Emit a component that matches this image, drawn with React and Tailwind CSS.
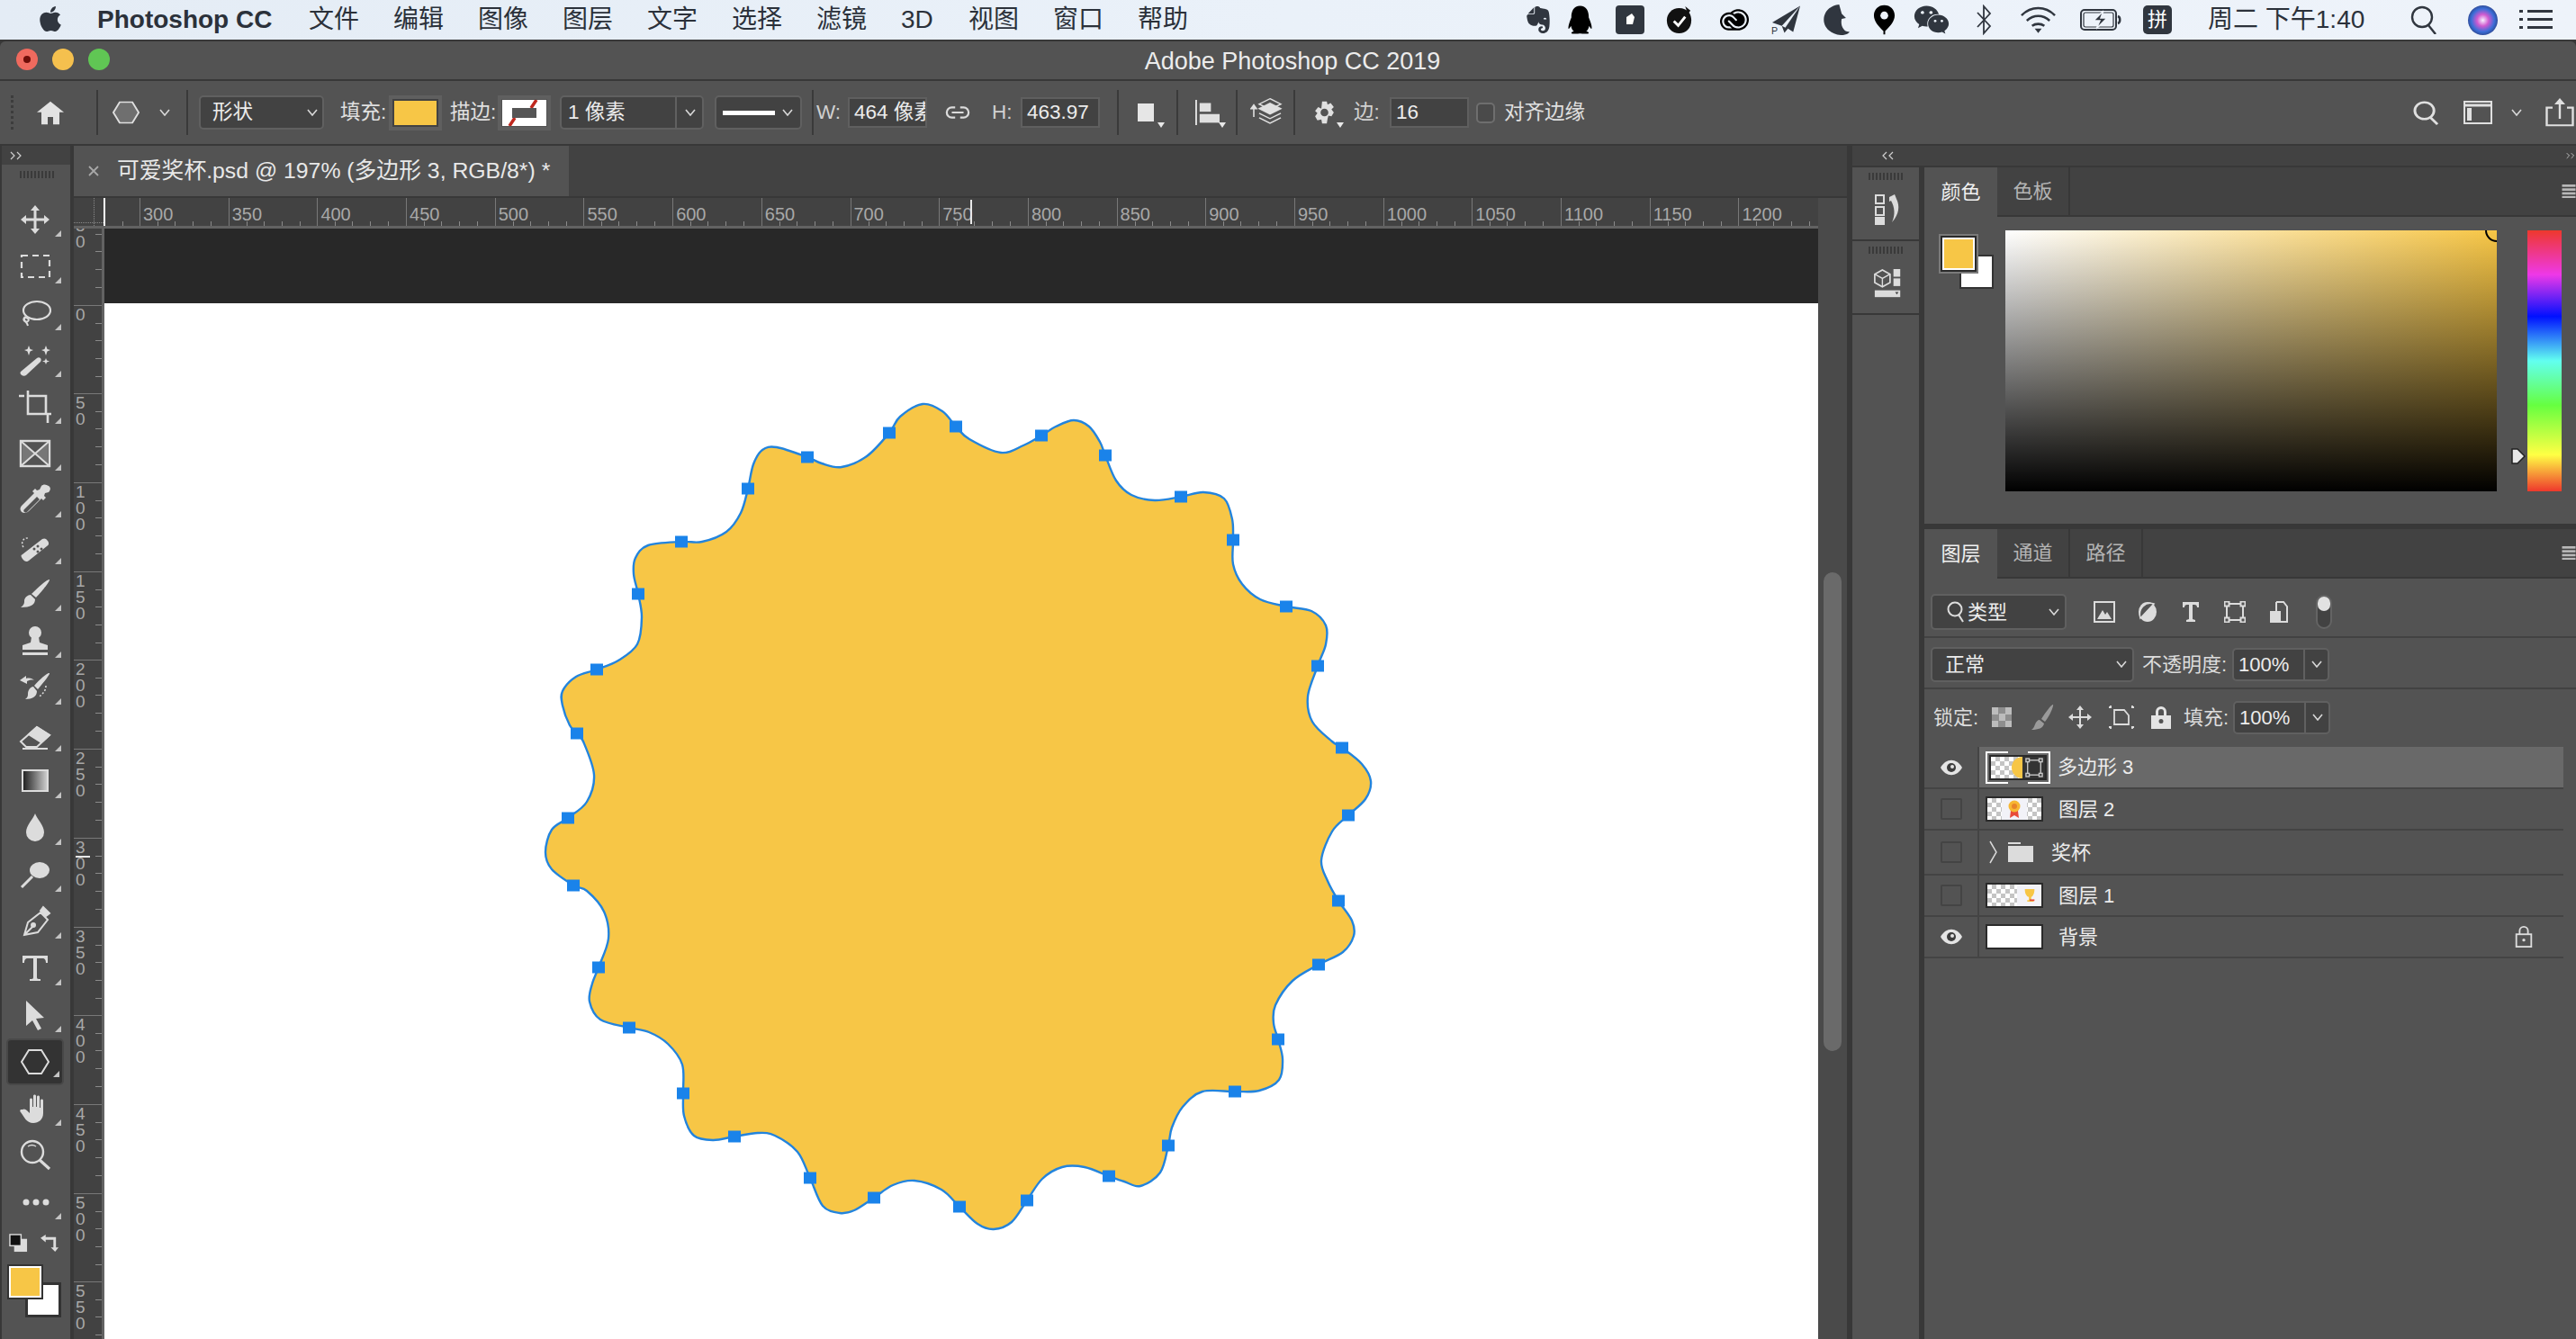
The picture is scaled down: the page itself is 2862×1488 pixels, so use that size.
import React from 'react';
import { FaApple, FaQq, FaWeixin } from 'react-icons/fa';
import { SiEvernote, SiAdobecreativecloud } from 'react-icons/si';

const pts = [
[988,481],[1000,463],[1025,449],[1047,457],[1062,474],[1077,488],[1112,503],[1137,495],[1157,484],[1173,474],[1193,467],[1210,474],[1222,491],[1228,506],[1240,534],[1257,550],[1283,556],[1312,552],[1337,547],[1360,554],[1369,577],[1370,600],[1370,627],[1380,649],[1400,666],[1429,674],[1457,679],[1473,695],[1473,716],[1464,740],[1453,774],[1458,802],[1480,824],[1491,831],[1513,849],[1523,868],[1517,888],[1498,906],[1480,924],[1468,956],[1475,979],[1487,1001],[1502,1023],[1504,1040],[1492,1058],[1465,1072],[1436,1090],[1417,1117],[1415,1137],[1420,1155],[1425,1177],[1421,1200],[1399,1212],[1372,1213],[1336,1213],[1314,1230],[1302,1253],[1298,1273],[1289,1303],[1267,1318],[1249,1313],[1232,1307],[1205,1297],[1180,1297],[1158,1310],[1141,1334],[1124,1358],[1104,1366],[1086,1360],[1066,1341],[1046,1322],[1016,1312],[992,1317],[971,1331],[949,1345],[933,1348],[914,1340],[900,1309],[886,1280],[861,1262],[842,1259],[816,1263],[792,1267],[771,1262],[760,1240],[759,1215],[758,1183],[742,1160],[721,1147],[699,1142],[667,1133],[655,1113],[658,1093],[665,1075],[676,1043],[671,1013],[652,990],[637.5,984],[613,966],[606,947],[613,922],[631,909],[652,891],[660,861],[648,824],[641,815],[633,806],[625,784],[625,768],[640,752],[663,744],[687,734],[708,716],[713,686],[709,660],[704,638],[706,620],[720,606],[757,602],[780,602],[807,591],[823,570],[831,543],[837,516],[847,500],[863,497],[897,508],[913,515],[935,519],[963,507]
];
const handles = [[988,481],[1062,474],[1157,484],[1228,506],[1312,552],[1370,600],[1429,674],[1464,740],[1491,831],[1498,906],[1487,1001],[1465,1072],[1420,1155],[1372,1213],[1298,1273],[1232,1307],[1141,1334],[1066,1341],[971,1331],[900,1309],[816,1263],[759,1215],[699,1142],[665,1075],[637,984],[631,909],[641,815],[663,744],[709,660],[757,602],[831,543],[897,508]];

function smooth(p) {
  const n = p.length;
  let d = `M${p[0][0]} ${p[0][1]}`;
  for (let i = 0; i < n; i++) {
    const a = p[(i - 1 + n) % n], b = p[i], c = p[(i + 1) % n], e = p[(i + 2) % n];
    const c1 = [b[0] + (c[0] - a[0]) / 6, b[1] + (c[1] - a[1]) / 6];
    const c2 = [c[0] - (e[0] - b[0]) / 6, c[1] - (e[1] - b[1]) / 6];
    d += `C${c1[0].toFixed(1)} ${c1[1].toFixed(1)} ${c2[0].toFixed(1)} ${c2[1].toFixed(1)} ${c[0]} ${c[1]}`;
  }
  return d + 'Z';
}

const Chev = ({ className = 'w-[12px] h-[8px]', color = '#d8d8d8' }) => (
  <svg viewBox="0 0 12 8" className={className} fill="none" stroke={color} strokeWidth="1.6"><path d="M1 1l5 6 5-6" /></svg>
);

const Sep = () => <div className="w-[2px] h-[50px] bg-[#3a3a3a]" />;

const Select = ({ w, children }) => (
  <div className={`${w} h-[38px] flex items-center justify-between rounded-[5px] border-2 border-[#606060] bg-[#424242] text-[#ececec]`}>
    {children}
  </div>
);

const Input = ({ w, children }) => (
  <div className={`${w} h-[34px] flex items-center pl-[5px] border-2 border-[#5f5f5f] bg-[#424242] text-[#ececec] overflow-hidden whitespace-nowrap`}>{children}</div>
);

const Tri = () => <svg viewBox="0 0 8 6" className="w-[8px] h-[6px] self-end" fill="#e8e8e8"><path d="M0 0h8L4 6z" /></svg>;

function MenuBar() {
  const items = ['文件', '编辑', '图像', '图层', '文字', '选择', '滤镜', '3D', '视图', '窗口', '帮助'];
  const ic = '#30363f';
  return (
    <div className="h-[44px] shrink-0 flex items-center bg-[linear-gradient(to_right,#e4ecf5,#eaf1f9_50%,#eef3fa)] text-[#2b313a] text-[28px] leading-[46px]">
      <FaApple className="ml-[40px] w-[32px] h-[32px] text-[#30363f] -mt-[3px]" />
      <div className="ml-[36px] font-bold w-[199px] whitespace-nowrap text-[28px]">Photoshop CC</div>
      <div className="ml-[36px] flex gap-[38px] whitespace-nowrap">
        {items.map((t) => <span key={t} className={t === '3D' ? 'w-[37px]' : 'w-[56px]'}>{t}</span>)}
      </div>
      <div className="ml-[374px] flex items-center h-full">
        <SiEvernote className="w-[30px] h-[34px]" style={{ color: ic }} />
        <FaQq className="ml-[18px] w-[27px] h-[32px] text-black" />
        <svg viewBox="0 0 32 32" className="ml-[26px] w-[32px] h-[32px]"><rect width="32" height="32" rx="4" fill={ic} /><path d="M12 13l6-4 3 4-2 8-7 0z" fill="#fff" /></svg>
        <svg viewBox="0 0 34 34" className="ml-[22px] w-[33px] h-[33px]"><path d="M17 3c10 0 14 7 14 14 0 9-6 15-14 15S3 26 3 17C3 9 9 3 17 3z" fill="#111" /><path d="M24 1l6 5-3 4z" fill="#111" /><path d="M11 18l5 5 8-10" fill="none" stroke="#fff" strokeWidth="3" /></svg>
        <SiAdobecreativecloud className="ml-[26px] w-[38px] h-[32px] text-black" />
        <svg viewBox="0 0 34 34" className="ml-[22px] w-[33px] h-[34px]"><path d="M33 1L1 20l11 4 3 8 4-5 6 4z" fill={ic} /><path d="M33 1L12 24l4 2z" fill="#eaf1f9" /><text x="0" y="33" fontSize="11" fill={ic} fontFamily="Liberation Sans">P</text></svg>
        <svg viewBox="0 0 32 38" className="ml-[24px] w-[31px] h-[36px]"><path d="M19 1C8 2 1 10 1 19s8 17 20 18c8 0 10-3 10-4-6 1-11-7-9-15l5-1-5-5z" fill={ic} /></svg>
        <svg viewBox="0 0 26 36" className="ml-[25px] w-[25px] h-[36px]"><path d="M13 1c7 0 12 5 12 12 0 7-6 13-11 18v4h-2v-4C7 26 1 20 1 13 1 6 6 1 13 1z" fill="#000" /><circle cx="13" cy="13" r="4.5" fill="#eef3fa" /></svg>
        <FaWeixin className="ml-[20px] w-[40px] h-[36px]" style={{ color: ic }} />
        <svg viewBox="0 0 20 34" className="ml-[28px] w-[20px] h-[34px]" fill="none" stroke={ic} strokeWidth="1.8"><path d="M3 9l14 15-7 8V2l7 8L3 25" /></svg>
        <svg viewBox="0 0 42 32" className="ml-[30px] w-[41px] h-[32px]" fill="none" stroke={ic} strokeWidth="2.6"><path d="M2 11c11-11 27-11 38 0M8 17c8-7 18-7 26 0M14 23c4-3 10-3 14 0" /><path d="M21 31l-4-5h8z" fill={ic} stroke="none" /></svg>
        <svg viewBox="0 0 46 26" className="ml-[26px] w-[46px] h-[26px]" fill="none" stroke={ic} strokeWidth="2"><rect x="1" y="2" width="39" height="22" rx="4" /><rect x="4" y="5" width="33" height="16" rx="2" strokeWidth="1.2" /><path d="M42 9c3 1 3 7 0 8" strokeWidth="2.5" /><path d="M26 3L15 14h7l-4 9 12-12h-7z" fill={ic} stroke="#eef3fa" strokeWidth="1.5" /></svg>
        <div className="ml-[24px] w-[32px] h-[32px] rounded-[5px] bg-[#30363f] flex items-center justify-center text-white text-[22px] leading-none">拼</div>
        <div className="ml-[40px] w-[177px] whitespace-nowrap text-[28px]">周二 下午1:40</div>
        <svg viewBox="0 0 30 32" className="ml-[48px] w-[30px] h-[32px]" fill="none" stroke={ic} strokeWidth="2.4"><circle cx="13" cy="13" r="11" /><path d="M20 22l8 10" /></svg>
        <div className="ml-[34px] w-[33px] h-[33px] rounded-full bg-[radial-gradient(circle_at_50%_50%,#f8f0ff_0%,#d05ad0_28%,#3a6ed8_55%,#2b3a78_80%,#101830_100%)]" />
        <svg viewBox="0 0 37 22" className="ml-[24px] w-[37px] h-[22px]" fill={ic}><rect x="0" y="0" width="4" height="3" /><rect x="9" y="0" width="28" height="3" /><rect x="0" y="9" width="4" height="3" /><rect x="9" y="9" width="28" height="3" /><rect x="0" y="18" width="4" height="3" /><rect x="9" y="18" width="28" height="3" /></svg>
      </div>
    </div>
  );
}

function TitleBar() {
  return (
    <div className="h-[42px] mt-[2px] pt-[2px] shrink-0 relative flex items-center justify-center bg-[#535353] text-[#ececec] text-[27px] rounded-t-[6px]">
      <div className="absolute left-[18px] top-[8px] flex gap-[16px]">
        <span className="w-[24px] h-[24px] rounded-full bg-[#ef6a5e] flex items-center justify-center"><span className="w-[8px] h-[8px] rounded-full bg-[#6e0e08]" /></span>
        <span className="w-[24px] h-[24px] rounded-full bg-[#f5c04e]" />
        <span className="w-[24px] h-[24px] rounded-full bg-[#60c654]" />
      </div>
      <span className="ml-[10px]">Adobe Photoshop CC 2019</span>
    </div>
  );
}

function OptionsBar() {
  return (
    <div className="h-[70px] mt-[2px] shrink-0 flex items-center bg-[#535353] text-[#e0e0e0] text-[22.5px] whitespace-nowrap">
      <div className="ml-[12px] w-[4px] h-[38px] border-l-[3px] border-dotted border-[#3c3c3c]" />
      <svg viewBox="0 0 32 36" preserveAspectRatio="none" className="ml-[24px] w-[32px] h-[27px]" fill="#e2e2e2"><path d="M16 1L1 17h5v18h7V24h6v11h7V17h5z" /></svg>
      <div className="ml-[35px]"><Sep /></div>
      <svg viewBox="0 0 30 36" preserveAspectRatio="none" className="ml-[16px] w-[30px] h-[26px]" fill="#6f6f6f" stroke="#e0e0e0" strokeWidth="2"><path d="M8 2h14l7 16-7 16H8L1 18z" /></svg>
      <div className="ml-[22px]"><Chev /></div>
      <div className="ml-[18px]"><Sep /></div>
      <div className="ml-[12px]"><Select w="w-[139px]"><span className="ml-[13px]">形状</span><span className="mr-[5px]"><Chev /></span></Select></div>
      <span className="ml-[18px] w-[54px]">填充:</span>
      <div className="w-[59px] h-[39px] border-[4px] border-[#5f5f5f] bg-[#424242] p-[2px]"><div className="w-full h-full bg-[#f7c646]" /></div>
      <span className="ml-[9px] w-[53px]">描边:</span>
      <div className="w-[59px] h-[39px] border-[4px] border-[#5f5f5f] p-[1px]">
        <svg viewBox="0 0 49 29" className="w-full h-full"><rect width="49" height="29" fill="#fff" /><path d="M38 0l-6 9M14 20L8 29" stroke="#c0281e" strokeWidth="3.5" /><rect x="11" y="9" width="27" height="11" fill="#555" /></svg>
      </div>
      <div className="ml-[10px]"><Select w="w-[160px]"><span className="ml-[7px]">1 像素</span><span className="h-full flex items-center gap-[9px] border-l-2 border-[#606060] pl-[9px] pr-[7px]"><Chev /></span></Select></div>
      <div className="ml-[12px]"><Select w="w-[97px]"><span className="ml-[7px] w-[58px] h-[5px] bg-white" /><span className="mr-[8px]"><Chev /></span></Select></div>
      <div className="ml-[11px]"><Sep /></div>
      <span className="ml-[3px] w-[35px] text-[#d0d0d0]">W:</span>
      <Input w="w-[88px]">464 像素</Input>
      <svg viewBox="0 0 30 18" className="ml-[20px] w-[28px] h-[18px]" fill="none" stroke="#dcdcdc" strokeWidth="2.4"><path d="M12 3H8a6 6 0 000 12h4M18 3h4a6 6 0 010 12h-4M8 9h14" /></svg>
      <span className="ml-[24px] w-[32px] text-[#d0d0d0]">H:</span>
      <Input w="w-[88px]">463.97</Input>
      <div className="ml-[19px]"><Sep /></div>
      <div className="ml-[21px] flex w-[30px]"><div className="w-[20px] h-[20px] bg-[#e6e6e6]" /><div className="self-end flex items-end -mb-[7px] ml-[4px]"><Tri /></div></div>
      <div className="ml-[13px]"><Sep /></div>
      <svg viewBox="0 0 28 32" preserveAspectRatio="none" className="ml-[19px] w-[27px] h-[28px]"><rect x="0" y="0" width="2" height="32" fill="#e0e0e0" /><rect x="5" y="4" width="13" height="11" fill="#e0e0e0" /><rect x="5" y="18" width="23" height="11" fill="#e0e0e0" /></svg>
      <div className="self-center mt-[28px] -ml-[1px]"><Tri /></div>
      <div className="ml-[11px]"><Sep /></div>
      <svg viewBox="0 0 36 40" preserveAspectRatio="none" className="ml-[14px] w-[36px] h-[34px]" fill="#e0e0e0" stroke="#e0e0e0" strokeWidth="1.6"><path d="M22 2l12 7-12 7-12-7z" fill="none" /><path d="M10 15l12 7 12-7-12-7z" /><path d="M10 21l12 7 12-7M10 27l12 7 12-7" fill="none" /><path d="M4 14v12" /><path d="M4 10l-3 5h6z" /></svg>
      <div className="ml-[12px]"><Sep /></div>
      <svg viewBox="0 0 28 30" className="ml-[19px] w-[27px] h-[26px]" fill="#e0e0e0"><path fillRule="evenodd" d="M11 1h6l1 4 4-2 4 5-3 3 3 4-3 5-4-1-1 4-1 6h-6l-1-5-5 1-3-5 3-4-3-3 4-5 4 2zM14 10a5 5 0 100 10 5 5 0 000-10z" /></svg>
      <div className="mt-[28px]"><Tri /></div>
      <span className="ml-[11px] w-[40px] text-[#d0d0d0]">边:</span>
      <Input w="w-[88px]">16</Input>
      <div className="ml-[8px] w-[21px] h-[23px] rounded-[5px] border-2 border-[#6e6e6e] bg-[#4a4a4a]" />
      <span className="ml-[10px]">对齐边缘</span>
      <svg viewBox="0 0 30 32" preserveAspectRatio="none" className="ml-[920px] w-[29px] h-[27px]" fill="none" stroke="#e0e0e0" strokeWidth="3"><circle cx="13" cy="13" r="11" /><path d="M20 22l8 9" /></svg>
      <svg viewBox="0 0 32 26" className="ml-[27px] w-[32px] h-[26px]" fill="none" stroke="#e0e0e0" strokeWidth="2"><rect x="1" y="1" width="30" height="24" /><path d="M1 5h30" strokeWidth="3" /><rect x="4" y="8" width="5" height="14" fill="#e0e0e0" stroke="none" /></svg>
      <div className="ml-[21px]"><Chev /></div>
      <svg viewBox="0 0 32 36" preserveAspectRatio="none" className="ml-[26px] w-[32px] h-[32px]" fill="none" stroke="#e0e0e0" strokeWidth="2.4"><path d="M8 12H1.5v22h29V12H24M16 26V5" /><path d="M16 0l-6 8h12z" fill="#e0e0e0" stroke="none" /></svg>
    </div>
  );
}

const Tool = ({ children, selected, noTri, stroke }) => (
  <div className={`h-[52px] w-[64px] ml-[5px] shrink-0 flex items-center justify-center relative rounded-[5px] ${selected ? 'bg-[#333333] border-2 border-[#484848]' : ''}`}>
    <svg viewBox="0 0 36 36" className="w-[36px] h-[36px]" fill={stroke ? 'none' : '#dcdcdc'} stroke={stroke ? '#dcdcdc' : 'none'} strokeWidth={stroke ? 2 : 0}>{children}</svg>
    {!noTri && <svg viewBox="0 0 7 7" className="absolute right-[3px] bottom-[7px] w-[7px] h-[7px]" fill="#c4c4c4"><path d="M7 0v7H0z" /></svg>}
  </div>
);

function Toolbar() {
  return (
    <div className="w-[76px] ml-[2px] shrink-0 flex flex-col bg-[#535353]">
      <div className="h-[21px] bg-[#424242] text-[#cfcfcf] flex items-center pl-[9px]">
        <svg viewBox="0 0 14 10" className="w-[14px] h-[10px]" fill="none" stroke="#cfcfcf" strokeWidth="1.2"><path d="M1 1l4 4-4 4M8 1l4 4-4 4" /></svg>
      </div>
      <div className="mt-[7px] mb-[20px] ml-[20px] w-[38px] h-[8px] bg-[repeating-linear-gradient(to_right,#3a3a3a_0,#3a3a3a_2px,transparent_2px,transparent_4px)]" />
      <div className="flex flex-col">
        <Tool><path d="M18 2l5 6h-3.500v8.500H28V13l6 5-6 5v-3.500h-8.500V28H23l-5 6-5-6h3.500v-8.500H8V23l-6-5 6-5v3.500h8.500V8H13z" /></Tool>
        <Tool stroke><path d="M3 6h31v24H3z" strokeDasharray="7 5" strokeWidth="2.2" /></Tool>
        <Tool stroke><ellipse cx="20" cy="15" rx="15" ry="10" strokeWidth="2.2" /><path d="M7 22c-4 3 0 7 3 5s-3-6-4-3 3 3 4 8" /></Tool>
        <Tool><path d="M2 31l18-15c3-2 6 1 4 4L8 35c-3 2-8-1-6-4z" /><path d="M11 2l1.500 4L16 7l-3.500 1.500L11 13 9.500 8.500 6 7l3.500-1zM30 2l1.500 4L35 7l-3.500 1.500L30 13l-1.500-4.500L25 7l3.500-1zM30 16l1 2.500 3 1-3 1L30 23l-1-2.500-3-1 3-1z" /></Tool>
        <Tool stroke><path d="M0 6h6M10 0v26h22v10M10 6h20v20M32 26h8" strokeWidth="2.6" /></Tool>
        <Tool stroke><rect x="2" y="4" width="32" height="28" strokeWidth="2.4" /><path d="M4 6l14 12L4 30zM32 6L18 18l14 12z" fill="#777" stroke="none" /><path d="M2 4l32 28M34 4L2 32" /></Tool>
        <Tool><path fillRule="evenodd" d="M33 2c3 2 2 5 0 7l-4 1-1 3 2 2-3 3-2-2-14 14c-2 2-5 3-8 1-2-2-2-5 0-7l14-14-2-2 3-3 2 2 3-1 2-4c2-2 5-2 8 0zM20 14L6 28c-1 1-1 2 0 3s2 1 3 0l14-14z" /></Tool>
        <Tool><path d="M4 26L26 9c2-1 4-1 6 2s1 5-1 6L11 33c-2 2-5 1-7-2s-2-4 0-5z" /><path d="M5 18c-3-4-1-11 6-10" fill="none" stroke="#dcdcdc" strokeWidth="1.5" strokeDasharray="2 2" /><circle cx="17" cy="20" r="1.500" fill="#555" /><circle cx="21" cy="17" r="1.500" fill="#555" /><circle cx="21" cy="23" r="1.500" fill="#555" /><circle cx="25" cy="20" r="1.500" fill="#555" /></Tool>
        <Tool><path d="M34 2c1 1-7 12-15 20l-5-4C21 11 32 1 34 2zM13 19l5 5c0 6-5 9-16 9 4-3 4-5 4-7 0-4 4-7 7-7z" /></Tool>
        <Tool><circle cx="18" cy="9" r="7" /><path d="M14 14h8l1 6 9 3v5H4v-5l9-3z" /><rect x="4" y="31" width="28" height="3" /></Tool>
        <Tool><path d="M34 2c1 1-7 11-13 18l-4-4C23 9 32 1 34 2zM16 17l4 5c0 6-5 9-13 9 3-2 3-4 3-6 0-4 3-8 6-8zM1 10l7-5v3c4-1 7 0 9 2-3-1-6 0-8 1v3z" /><path d="M30 16c0 6-4 9-7 12" fill="none" stroke="#dcdcdc" strokeDasharray="2 2" strokeWidth="1.500" /></Tool>
        <Tool stroke><path d="M2 26L20 10l14 9-14 13H8z" /><path d="M20 10l14 9-9 8-14-9z" fill="#dcdcdc" /><path d="M4 34h28" /></Tool>
        <Tool><rect x="3" y="5" width="30" height="25" fill="#dcdcdc" /><defs><linearGradient id="grd"><stop offset="0" stopColor="#222" /><stop offset="1" stopColor="#ccc" /></linearGradient></defs><rect x="5" y="7" width="26" height="21" fill="url(#grd)" /></Tool>
        <Tool><path d="M18 2c2 6 10 13 10 21a10 10 0 01-20 0c0-8 8-15 10-21z" /></Tool>
        <Tool><ellipse cx="23" cy="13" rx="11" ry="9" /><path d="M15 20L3 32" stroke="#dcdcdc" strokeWidth="3" fill="none" /></Tool>
        <Tool stroke><path d="M6 33l4-14 14-11 8 8-11 14zM6 33l10-10" /><path d="M24 6l3-4 7 7-4 3z" fill="#dcdcdc" /><circle cx="16" cy="22" r="2" fill="#dcdcdc" /></Tool>
        <Tool><path d="M4 4h28v8h-2c0-3-1-5-4-5h-6v21c0 2 1 2 4 2v2H12v-2c3 0 4 0 4-2V7h-6c-3 0-4 2-4 5H4z" /></Tool>
        <Tool><path d="M8 2l20 19-9 1 6 11-4 2-6-11-7 6z" /></Tool>
        <Tool selected stroke><path d="M11 5h14l8 13-8 13H11L3 18z" strokeWidth="2" /></Tool>
        <Tool><path d="M4 19c3-2 6 2 8 4V8c0-2 3-2 3 0v8h1V4c0-2 3-2 3 0v12h1V5c0-2 3-2 3 0v12h1V9c0-2 3-2 3 0v14c0 7-5 11-11 11-8 0-10-7-14-12-1-1-1-2 0-3z" /></Tool>
        <Tool noTri stroke><circle cx="15" cy="14" r="12" strokeWidth="2.4" /><path d="M23 23l11 10" strokeWidth="3.2" /><path d="M10 8c3-2 6-2 9 0" strokeWidth="1.500" /></Tool>
        <Tool><circle cx="8" cy="18" r="3.500" /><circle cx="19" cy="18" r="3.500" /><circle cx="30" cy="18" r="3.500" /></Tool>
      </div>
      <div className="ml-[8px] mt-[9px] h-[34px] flex items-start">
        <svg viewBox="0 0 22 22" className="w-[21px] h-[21px]"><rect x="6" y="6" width="15" height="15" fill="#dcdcdc" /><rect x="1" y="1" width="13" height="13" fill="#111" stroke="#dcdcdc" strokeWidth="1.500" /></svg>
        <svg viewBox="0 0 22 22" className="ml-[14px] w-[21px] h-[21px]" fill="#dcdcdc"><path d="M0 5l6-4v3h12v12h3l-4 5-5-5h3V7H6v3z" /></svg>
      </div>
      <div className="ml-[6px] relative h-[60px]">
        <div className="absolute left-[20px] top-[20px] w-[40px] h-[39px] bg-white border-[3px] border-[#333333]" />
        <div className="absolute left-0 top-0 w-[40px] h-[39px] bg-white border-2 border-[#333333] p-[2px]"><div className="w-full h-full bg-[#f7c646]" /></div>
      </div>
    </div>
  );
}

function HRuler() {
  const labels = [300, 350, 400, 450, 500, 550, 600, 650, 700, 750, 800, 850, 900, 950, 1000, 1050, 1100, 1150, 1200];
  const ticks = 'h-[5px] bg-[repeating-linear-gradient(to_right,transparent_0,transparent_18.7px,#8a8a8a_18.7px,#8a8a8a_19.74px)]';
  return (
    <div className="h-[34px] mt-[2px] shrink-0 flex relative bg-[#383838]">
      <div className="w-[1938px] flex bg-[#424242] overflow-hidden border-b-[3px] border-[#626262]">
        <div className="w-[33px] shrink-0 relative">
          <div className="absolute left-0 right-0 top-[27px] border-t border-dotted border-[#8a8a8a]" />
          <div className="absolute top-0 bottom-0 left-[22px] border-l border-dotted border-[#8a8a8a]" />
        </div>
        <div className="w-[2px] shrink-0 bg-white" />
        <div className="w-[38px] shrink-0 flex flex-col justify-end"><div className={ticks} /></div>
        {labels.map((l) => (
          <div key={l} className="w-[98.7px] shrink-0 flex flex-col justify-between border-l border-[#787878] overflow-visible">
            <span className="pl-[3px] pt-[3px] text-[20px] leading-[30px] text-[#a8a8a8] whitespace-nowrap h-[26px]">{l}</span>
            <div className={ticks} />
          </div>
        ))}
      </div>
      <div className="absolute left-[996px] top-[2px] w-[2px] h-[27px] bg-[#e8e8e8]" />
      <div className="flex-1 bg-[#4a4a4a]" />
    </div>
  );
}

function VRuler() {
  const labels = ['50', '0', '50', '100', '150', '200', '250', '300', '350', '400', '450', '500', '550'];
  return (
    <div className="w-[34px] shrink-0 bg-[#424242] overflow-hidden relative border-r-[3px] border-[#626262]">
      <div className="-mt-[14px] flex flex-col">
        {labels.map((l, i) => (
          <div key={i} className="h-[98.7px] shrink-0 flex justify-between border-t border-[#787878]">
            <div className="pl-[2px] pt-[1px] text-[19px] leading-[18px] text-[#a8a8a8] flex flex-col">
              {l.split('').map((c, j) => <span key={j}>{c}</span>)}
            </div>
            <div className="w-[7px] h-full bg-[repeating-linear-gradient(to_bottom,transparent_0,transparent_18.7px,#8a8a8a_18.7px,#8a8a8a_19.74px)]" />
          </div>
        ))}
      </div>
      <div className="absolute left-[2px] top-[697px] w-[16px] h-[2px] bg-[#e8e8e8]" />
    </div>
  );
}

function Canvas() {
  return (
    <div className="w-[1904px] shrink-0 flex flex-col relative overflow-hidden bg-white">
      <div className="h-[83px] bg-[#282828]" />
      <svg viewBox="116 254 1904 1234" className="absolute left-0 top-0 w-[1904px] h-[1234px]">
        <path d={smooth(pts)} fill="#f7c646" stroke="#2384dd" strokeWidth="2.4" />
        {handles.map(([x, y], i) => <rect key={i} x={x - 7} y={y - 6.5} width="14" height="13" fill="#1a83ea" />)}
      </svg>
    </div>
  );
}

function Dock() {
  const Grip = () => <div className="mx-auto mt-[6px] w-[38px] h-[8px] bg-[repeating-linear-gradient(to_right,#3a3a3a_0,#3a3a3a_2px,transparent_2px,transparent_4px)]" />;
  return (
    <div className="w-[74px] shrink-0 ml-[6px] flex flex-col gap-[2px] bg-[#383838]">
      <div className="h-[80px] bg-[#535353]">
        <Grip />
        <svg viewBox="0 0 30 34" className="ml-[25px] mt-[16px] w-[30px] h-[34px]"><path d="M1 1h9v9H1zM1 14h9v9H1z" fill="none" stroke="#dcdcdc" strokeWidth="2" /><rect x="0" y="25" width="11" height="9" fill="#dcdcdc" /><path d="M16 3l6-3 2 5c4 8 3 17-5 26 4-8 3-17-1-24l-2 1z" fill="#dcdcdc" /></svg>
      </div>
      <div className="h-[80px] bg-[#535353]">
        <Grip />
        <svg viewBox="0 0 32 36" className="ml-[24px] mt-[17px] w-[32px] h-[34px]" fill="#dcdcdc"><path d="M9 1l9 5v10l-9 5-9-5V6z" fill="none" stroke="#dcdcdc" strokeWidth="1.8" /><path d="M0 6l9 5 9-5M9 11v10" fill="none" stroke="#dcdcdc" strokeWidth="1.500" /><rect x="22" y="0" width="8" height="9" /><rect x="22" y="11" width="8" height="9" /><rect x="0" y="25" width="30" height="8" /><path d="M24 27h4l-2 3z" fill="#444" /></svg>
      </div>
      <div className="flex-1 bg-[#535353]" />
    </div>
  );
}

const PanelTabs = ({ tabs, h = 'h-[55px]' }) => (
  <div className={`${h} shrink-0 flex bg-[#424242] items-stretch relative`}>
    {tabs.map((t, i) => (
      <div key={t} className={`w-[81px] flex items-center justify-center text-[22px] ${i === 0 ? 'bg-[#535353] text-[#f0f0f0]' : 'text-[#b4b4b4] border-r-2 border-b-2 border-[#383838]'}`}>{t}</div>
    ))}
    <div className="flex-1 border-b-2 border-[#383838] flex items-center justify-end">
      <svg viewBox="0 0 14 14" className="w-[16px] h-[15px]" fill="#b8b8b8"><rect width="14" height="2.500" /><rect y="4" width="14" height="2.500" /><rect y="8" width="14" height="2.500" /><rect y="12" width="14" height="2" /></svg>
    </div>
  </div>
);

const Eye = () => (
  <svg viewBox="0 0 26 18" className="w-[26px] h-[18px]"><path d="M1 9c6-11 18-11 24 0-6 11-18 11-24 0z" fill="#e4e4e4" /><circle cx="13" cy="9" r="5" fill="#3c3c3c" /><circle cx="14" cy="8" r="2" fill="#e4e4e4" /></svg>
);

const Check = () => <div className="w-[24px] h-[24px] border-2 border-[#444444] rounded-[2px]" />;

const checker = 'bg-[repeating-conic-gradient(#c4c4c4_0_25%,#ffffff_0_50%)]';

const Row = ({ active, eye, h, children }) => (
  <div className={`${h} flex shrink-0`}>
    <div className="w-[59px] shrink-0 bg-[#535353] flex items-center justify-center mr-[2px]">{eye ? <Eye /> : <Check />}</div>
    <div className={`flex-1 flex items-center text-[22px] text-[#ececec] ${active ? 'bg-[#696969]' : 'bg-[#535353]'}`}>{children}</div>
  </div>
);

function LayersPanel() {
  return (
    <div className="flex-1 flex flex-col bg-[#535353] mt-[6px] whitespace-nowrap">
      <PanelTabs tabs={['图层', '通道', '路径']} />
      <div className="h-[66px] pt-[10px] shrink-0 flex items-center border-b-2 border-[#424242] text-[#ececec] text-[22px]">
        <div className="ml-[7px] w-[151px] h-[40px] rounded-[5px] border-2 border-[#606060] bg-[#424242] flex items-center">
          <svg viewBox="0 0 20 24" className="ml-[16px] w-[20px] h-[24px]" fill="none" stroke="#dcdcdc" strokeWidth="2"><circle cx="9" cy="9" r="7.500" /><path d="M13 15l5 8" /></svg>
          <span className="ml-[3px]">类型</span>
          <span className="ml-auto mr-[6px]"><Chev /></span>
        </div>
        <svg viewBox="0 0 24 24" className="ml-[30px] w-[24px] h-[24px]" fill="none" stroke="#dcdcdc" strokeWidth="2"><rect x="1" y="1" width="22" height="22" /><path d="M4 20l6-10 3 5 2-3 5 8z" fill="#dcdcdc" stroke="none" /></svg>
        <svg viewBox="0 0 22 24" className="ml-[25px] w-[22px] h-[24px]"><ellipse cx="11" cy="12" rx="10" ry="11" fill="#dcdcdc" /><path d="M3 19L18 3C9 0 0 8 3 19z" fill="#535353" stroke="#dcdcdc" strokeWidth="1.500" /></svg>
        <svg viewBox="0 0 20 24" className="ml-[27px] w-[20px] h-[24px]" fill="#dcdcdc"><path d="M1 1h18v6h-2c0-2-1-3-3-3h-2v16l3 1v2H5v-2l3-1V4H6C4 4 3 5 3 7H1z" /></svg>
        <svg viewBox="0 0 24 24" className="ml-[27px] w-[24px] h-[24px]" fill="none" stroke="#dcdcdc" strokeWidth="2"><path d="M3 3h18v18H3z" /><rect x="0.500" y="0.500" width="5" height="5" fill="#535353" /><rect x="18.500" y="0.500" width="5" height="5" fill="#535353" /><rect x="0.500" y="18.500" width="5" height="5" fill="#535353" /><rect x="18.500" y="18.500" width="5" height="5" fill="#535353" /></svg>
        <svg viewBox="0 0 20 24" className="ml-[27px] w-[20px] h-[24px]"><path d="M7 1h8l4 5v17h-8" fill="none" stroke="#dcdcdc" strokeWidth="2" /><path d="M7 1v10" stroke="#dcdcdc" strokeWidth="2" /><rect x="0" y="11" width="12" height="13" fill="#dcdcdc" /></svg>
        <div className="ml-[31px] w-[18px] h-[38px] rounded-full border-2 border-[#646464] bg-[#424242] flex flex-col">
          <div className="w-[14px] h-[16px] rounded-full bg-[#e2e2e2]" />
        </div>
      </div>
      <div className="h-[57px] pt-[3px] shrink-0 flex items-center border-b-2 border-[#424242] text-[#ececec] text-[22px]">
        <div className="ml-[7px] w-[226px] h-[39px] rounded-[5px] border-2 border-[#606060] bg-[#424242] flex items-center justify-between pl-[14px] pr-[6px]"><span>正常</span><Chev /></div>
        <span className="ml-[9px] w-[100px] text-[#dcdcdc]">不透明度:</span>
        <div className="w-[108px] h-[37px] rounded-[5px] border-2 border-[#606060] bg-[#424242] flex items-center"><span className="ml-[5px] w-[72px]">100%</span><span className="h-full border-l-2 border-[#606060] flex-1 flex items-center justify-center"><Chev /></span></div>
      </div>
      <div className="h-[62px] shrink-0 flex items-center text-[#dcdcdc] text-[22px]">
        <span className="ml-[10px] w-[65px]">锁定:</span>
        <div className="w-[22px] h-[22px] bg-[repeating-conic-gradient(#8e8e8e_0_25%,#bcbcbc_0_50%)] bg-[length:15px_15px]" />
        <svg viewBox="0 0 26 28" className="ml-[21px] w-[26px] h-[28px]" fill="#9a9a9a"><path d="M25 0c1 1-3 12-9 19l-4-3C17 8 24-1 25 0zM10 17l5 4c-1 5-6 7-14 7 3-2 3-4 4-6 1-3 3-5 5-5z" /></svg>
        <svg viewBox="0 0 26 26" className="ml-[16px] w-[26px] h-[26px]" fill="#dcdcdc"><path d="M13 0l4 5h-3v7h7V9l5 4-5 4v-3h-7v7h3l-4 5-4-5h3v-7H5v3l-5-4 5-4v3h7V5H9z" /></svg>
        <svg viewBox="0 0 28 26" className="ml-[19px] w-[28px] h-[26px]" fill="none" stroke="#dcdcdc" strokeWidth="1.800"><path d="M6 5h11l5 6v10H6z" /><path d="M0 2h3M25 2h3M0 24h3M25 24h3M2 0v3M26 0v3M2 23v3M26 23v3" /></svg>
        <svg viewBox="0 0 22 26" className="ml-[19px] w-[22px] h-[26px]" fill="#e4e4e4"><path fillRule="evenodd" d="M5 11V7a6 6 0 0112 0v4h5v15H0V11zM8 11h6V7a3 3 0 00-6 0zM11 15a2.500 2.500 0 100 5 2.500 2.500 0 000-5z" /></svg>
        <span className="ml-[14px] w-[55px]">填充:</span>
        <div className="w-[108px] h-[37px] rounded-[5px] border-2 border-[#606060] bg-[#424242] flex items-center text-[#ececec]"><span className="ml-[5px] w-[72px]">100%</span><span className="h-full border-l-2 border-[#606060] flex-1 flex items-center justify-center"><Chev /></span></div>
      </div>
      <div className="mt-[2px] flex flex-col gap-[2px] w-[710px] bg-[#444444] border-b-2 border-[#444444]">
        <Row active eye h="h-[45px]">
          <div className="ml-[7px] w-[72px] h-[36px] relative flex items-center justify-center">
            <div className="w-[64px] h-[28px] flex border-2 border-[#2a2a2a] bg-[#333333]">
              <div className={`w-[35px] h-full ${checker} bg-[length:10px_10px] flex justify-end`}><div className="w-[12px] h-full bg-[#f7c646] rounded-l-full" /></div>
              <div className="flex-1 flex items-center justify-center">
                <svg viewBox="0 0 22 24" className="w-[20px] h-[22px]" fill="none" stroke="#c8c8c8" strokeWidth="1.500"><rect x="3" y="3" width="16" height="18" /><rect x="1" y="1" width="4" height="4" fill="#444" /><rect x="17" y="1" width="4" height="4" fill="#444" /><rect x="1" y="19" width="4" height="4" fill="#444" /><rect x="17" y="19" width="4" height="4" fill="#444" /></svg>
              </div>
            </div>
            <svg viewBox="0 0 72 36" className="absolute inset-0 w-[72px] h-[36px]" fill="none" stroke="#fff" strokeWidth="2"><path d="M25 1H1v34h24M47 1h24v34H47" /></svg>
          </div>
          <span className="ml-[8px]">多边形 3</span>
        </Row>
        <Row h="h-[44px]">
          <div className={`ml-[7px] w-[64px] h-[28px] border-2 border-[#2a2a2a] ${checker} bg-[length:10px_10px] flex justify-center`}>
            <div className="w-[28px] h-full bg-[#f2f2f8] flex items-center justify-center">
              <svg viewBox="0 0 14 20" className="w-[14px] h-[20px]"><path d="M3 12l-1 8 5-3 5 3-1-8z" fill="#e84a3a" /><circle cx="7" cy="7" r="6.500" fill="#f7b733" /><circle cx="7" cy="7" r="3" fill="#e8842a" /></svg>
            </div>
          </div>
          <span className="ml-[17px]">图层 2</span>
        </Row>
        <Row h="h-[48px]">
          <svg viewBox="0 0 10 26" className="ml-[11px] w-[10px] h-[26px]" fill="none" stroke="#d8d8d8" strokeWidth="1.500"><path d="M1 1l7 12-7 12" /></svg>
          <svg viewBox="0 0 28 22" className="ml-[11px] w-[28px] h-[22px]" fill="#dcdcdc"><rect x="0" y="0" width="14" height="2" /><rect x="0" y="4" width="28" height="18" /></svg>
          <span className="ml-[20px]">奖杯</span>
        </Row>
        <Row h="h-[44px]">
          <div className={`ml-[7px] w-[64px] h-[28px] border-2 border-[#2a2a2a] ${checker} bg-[length:10px_10px] flex justify-end`}>
            <div className="w-[27px] h-full bg-[#f2f2f8] flex items-center justify-center">
              <svg viewBox="0 0 18 20" className="w-[16px] h-[20px]"><path d="M3 2h12c0 6-2 9-4 10v4h3v2H6v-2h2v-4C5 11 3 8 3 2z" fill="#f7c646" /><path d="M9 15h6v2H9z" fill="#e84a3a" /></svg>
            </div>
          </div>
          <span className="ml-[17px]">图层 1</span>
        </Row>
        <Row eye h="h-[44px]">
          <div className="ml-[7px] w-[64px] h-[28px] border-2 border-[#2a2a2a] bg-white" />
          <span className="ml-[17px]">背景</span>
          <svg viewBox="0 0 20 26" className="ml-auto mr-[34px] w-[20px] h-[24px]" fill="none" stroke="#dcdcdc" strokeWidth="2"><path d="M5 10V6a5 5 0 0110 0v4" /><rect x="1" y="10" width="18" height="15" /><circle cx="10" cy="17" r="1.800" fill="#dcdcdc" stroke="none" /></svg>
        </Row>
      </div>
    </div>
  );
}

function ColorPanel() {
  return (
    <div className="h-[396px] shrink-0 flex flex-col bg-[#535353]">
      <PanelTabs tabs={['颜色', '色板']} />
      <div className="flex-1 flex pt-[15px] relative">
        <div className="ml-[16px] mt-[4px] w-[61px] h-[61px] relative shrink-0">
          <div className="absolute left-[23px] top-[23px] w-[38px] h-[38px] bg-white border-2 border-[#333333]" />
          <div className="absolute left-0 top-0 w-[44px] h-[44px] border-2 border-[#7a7a7a] bg-[#2a2a2a] p-[2px]"><div className="w-full h-full bg-[#f7c646] border-2 border-white" /></div>
        </div>
        <div className="ml-[13px] w-[546px] h-[290px] relative overflow-hidden bg-[linear-gradient(to_top,#000,transparent),linear-gradient(to_right,#fff,#f7c646)]">
          <div className="absolute right-[-13px] top-[-13px] w-[26px] h-[26px] rounded-full border-2 border-black" />
        </div>
        <svg viewBox="0 0 17 18" className="ml-[15px] mt-[242px] w-[17px] h-[18px] shrink-0"><path d="M2 1h6l8 8-8 8H2z" fill="#e8e8e8" stroke="#222" strokeWidth="1.500" /></svg>
        <div className="ml-[2px] w-[38px] h-[290px] bg-[linear-gradient(to_bottom,#ee382c_0%,#ee38e8_17%,#0010ff_33%,#62fff0_50%,#66ff40_67%,#ffff44_86%,#ee382c_100%)]" />
      </div>
    </div>
  );
}

export default function App() {
  return (
    <div className="w-[2862px] h-[1488px] overflow-hidden flex flex-col bg-[#383838] font-['Liberation_Sans','Noto_Sans_CJK_SC',sans-serif]">
      <MenuBar />
      <TitleBar />
      <OptionsBar />
      <div className="flex-1 mt-[2px] flex min-h-0">
        <Toolbar />
        <div className="w-[1970px] ml-[4px] shrink-0 flex flex-col">
          <div className="h-[56px] shrink-0 flex bg-[#424242]">
            <div className="w-[550px] bg-[#535353] flex items-center text-[#e8e8e8] text-[24.8px] whitespace-nowrap">
              <svg viewBox="0 0 12 12" className="ml-[16px] w-[12px] h-[12px]" stroke="#a8a8a8" strokeWidth="1.800"><path d="M1 1l10 10M11 1L1 11" /></svg>
              <span className="ml-[20px]">可爱奖杯.psd @ 197% (多边形 3, RGB/8*) *</span>
            </div>
          </div>
          <HRuler />
          <div className="flex-1 flex min-h-0 mt-0">
            <VRuler />
            <Canvas />
            <div className="flex-1 bg-[#4a4a4a] flex">
              <div className="ml-[6px] mt-[382px] w-[20px] h-[532px] rounded-full bg-[#6a6a6a]" />
            </div>
          </div>
        </div>
        <div className="flex-1 flex flex-col">
          <div className="h-[22px] shrink-0 ml-[6px] bg-[#424242] flex items-center justify-between pl-[33px] pr-[1px]">
            <svg viewBox="0 0 14 10" className="w-[14px] h-[10px]" fill="none" stroke="#cfcfcf" strokeWidth="1.200"><path d="M5 1L1 5l4 4M12 1L8 5l4 4" /></svg>
            <svg viewBox="0 0 14 10" className="w-[10px] h-[10px]" fill="none" stroke="#cfcfcf" strokeWidth="1.200"><path d="M1 1l4 4-4 4M8 1l4 4-4 4" /></svg>
          </div>
          <div className="flex-1 mt-[2px] flex min-h-0">
            <Dock />
            <div className="flex-1 ml-[6px] flex flex-col">
              <ColorPanel />
              <LayersPanel />
            </div>
          </div>
        </div>
      </div>
    </div>
  );
}
